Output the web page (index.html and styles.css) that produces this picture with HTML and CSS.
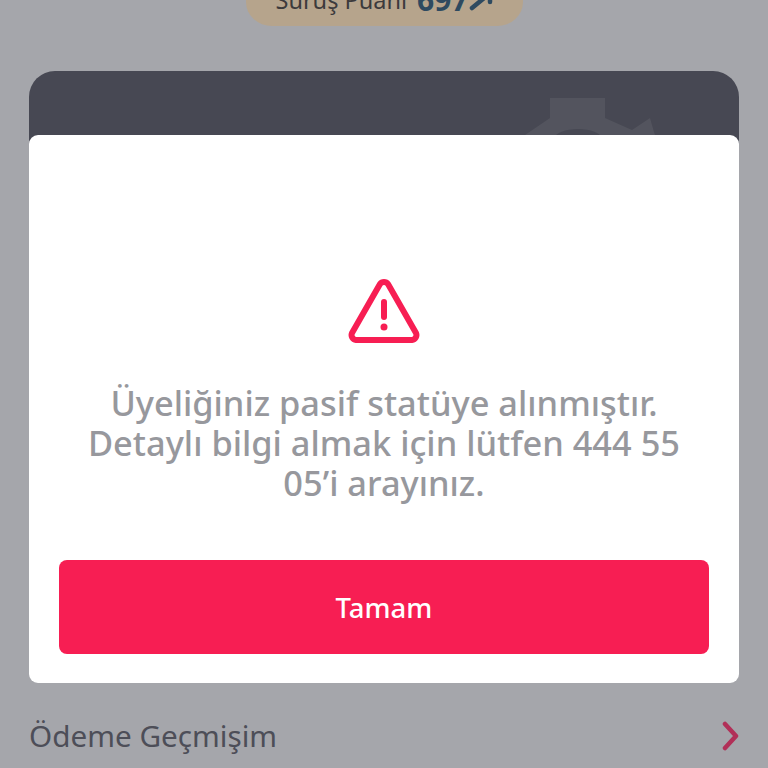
FILE: index.html
```html
<!DOCTYPE html>
<html lang="tr">
<head>
<meta charset="utf-8">
<title>Üyelik</title>
<link rel="stylesheet" href="styles.css">
</head>
<body>
<main class="screen">
  <div class="score"><span class="score-label">Sürüş Puanı</span> <span class="score-value">697</span>
    <svg class="score-arrow" width="24" height="22" viewBox="0 0 24 22" aria-hidden="true"><path d="M3 19 20 5M10 3h11v10" fill="none" stroke="#2e4a60" stroke-width="4.500" stroke-linecap="round"/></svg>
  </div>
  <section class="card">
    <svg class="gear" width="140" height="40" viewBox="0 0 140 40" aria-hidden="true">
      <path d="M30 0h55v20l27 12 18-12 4 14 2 6H0l5-3 25-17z" fill="#53545e"/>
      <path d="M35 40a23 9 0 0 1 46 0z" fill="#474853"/>
    </svg>
  </section>
  <div class="row">
    <span class="row-label">Ödeme Geçmişim</span>
    <svg class="chevron" width="18" height="30" viewBox="0 0 18 30" aria-hidden="true"><path d="M3 3l11 12L3 27" fill="none" stroke="#b13058" stroke-width="4.500" stroke-linecap="round" stroke-linejoin="round"/></svg>
  </div>
  <div class="modal" role="dialog">
    <svg class="alert" width="72" height="66" viewBox="0 0 72 66" aria-hidden="true">
      <path d="M32 6 4 55a5 5 0 0 0 4 7h56a5 5 0 0 0 4-7L40 6a5 5 0 0 0-8 0z" fill="none" stroke="#f71e53" stroke-width="6" stroke-linejoin="round"/>
      <path d="M36 24v15" stroke="#f71e53" stroke-width="6" stroke-linecap="round"/>
      <circle cx="36" cy="49" r="3.500" fill="#f71e53"/>
    </svg>
    <p class="message">Üyeliğiniz pasif statüye alınmıştır. Detaylı bilgi almak için lütfen 444 55 05’i arayınız.</p>
    <button class="ok" type="button">Tamam</button>
  </div>
</main>
</body>
</html>
```
FILE: styles.css
```css
* { box-sizing: border-box; }
html, body { margin: 0; padding: 0; }
.screen {
  position: relative;
  width: 768px;
  height: 768px;
  overflow: hidden;
  background: #a5a6ab;
  font-family: "Noto Sans", "Open Sans", sans-serif;
  display: flex;
  flex-direction: column;
  align-items: center;
}
.score {
  width: 277px;
  height: 50px;
  margin-top: -24px;
  background: #b6a48c;
  border-radius: 0 0 26px 26px / 0 0 24px 24px;
  display: flex;
  align-items: flex-end;
  justify-content: center;
  gap: 10px;
  padding-bottom: 11px;
  font-size: 23.500px;
  line-height: 30px;
  color: #3c3a3c;
  white-space: nowrap;
}
.score-value { font-size: 30px; font-weight: 700; color: #2e4a60; }
.score-arrow { margin-left: -10px; margin-bottom: 4px; }
.card {
  position: relative;
  width: 710px;
  height: 200px;
  margin-top: 45px;
  background: #474853;
  border-radius: 26px 26px 0 0;
  overflow: hidden;
}
.gear { position: absolute; left: 491px; top: 27px; }
.row {
  width: 710px;
  margin-top: 447px;
  display: flex;
  align-items: center;
  justify-content: space-between;
}
.row-label { font-size: 29.700px; line-height: 36px; color: #4d4e58; }
.chevron { margin-right: -1px; }
.modal {
  position: absolute;
  left: 29px;
  top: 135px;
  width: 710px;
  height: 548px;
  background: #fff;
  border-radius: 9px;
  display: flex;
  flex-direction: column;
  align-items: center;
  padding: 143px 30px 29px;
}
.alert { display: block; }
.message {
  margin: 39px 0 0;
  width: 640px;
  text-align: center;
  font-size: 34.400px;
  font-weight: 500;
  line-height: 40px;
  color: #97989d;
}
.ok {
  margin-top: auto;
  width: 650px;
  height: 94px;
  border: 0;
  border-radius: 8px;
  background: #f71e53;
  color: #fff;
  font: 500 27.500px "Noto Sans", "Open Sans", sans-serif;
}
```
